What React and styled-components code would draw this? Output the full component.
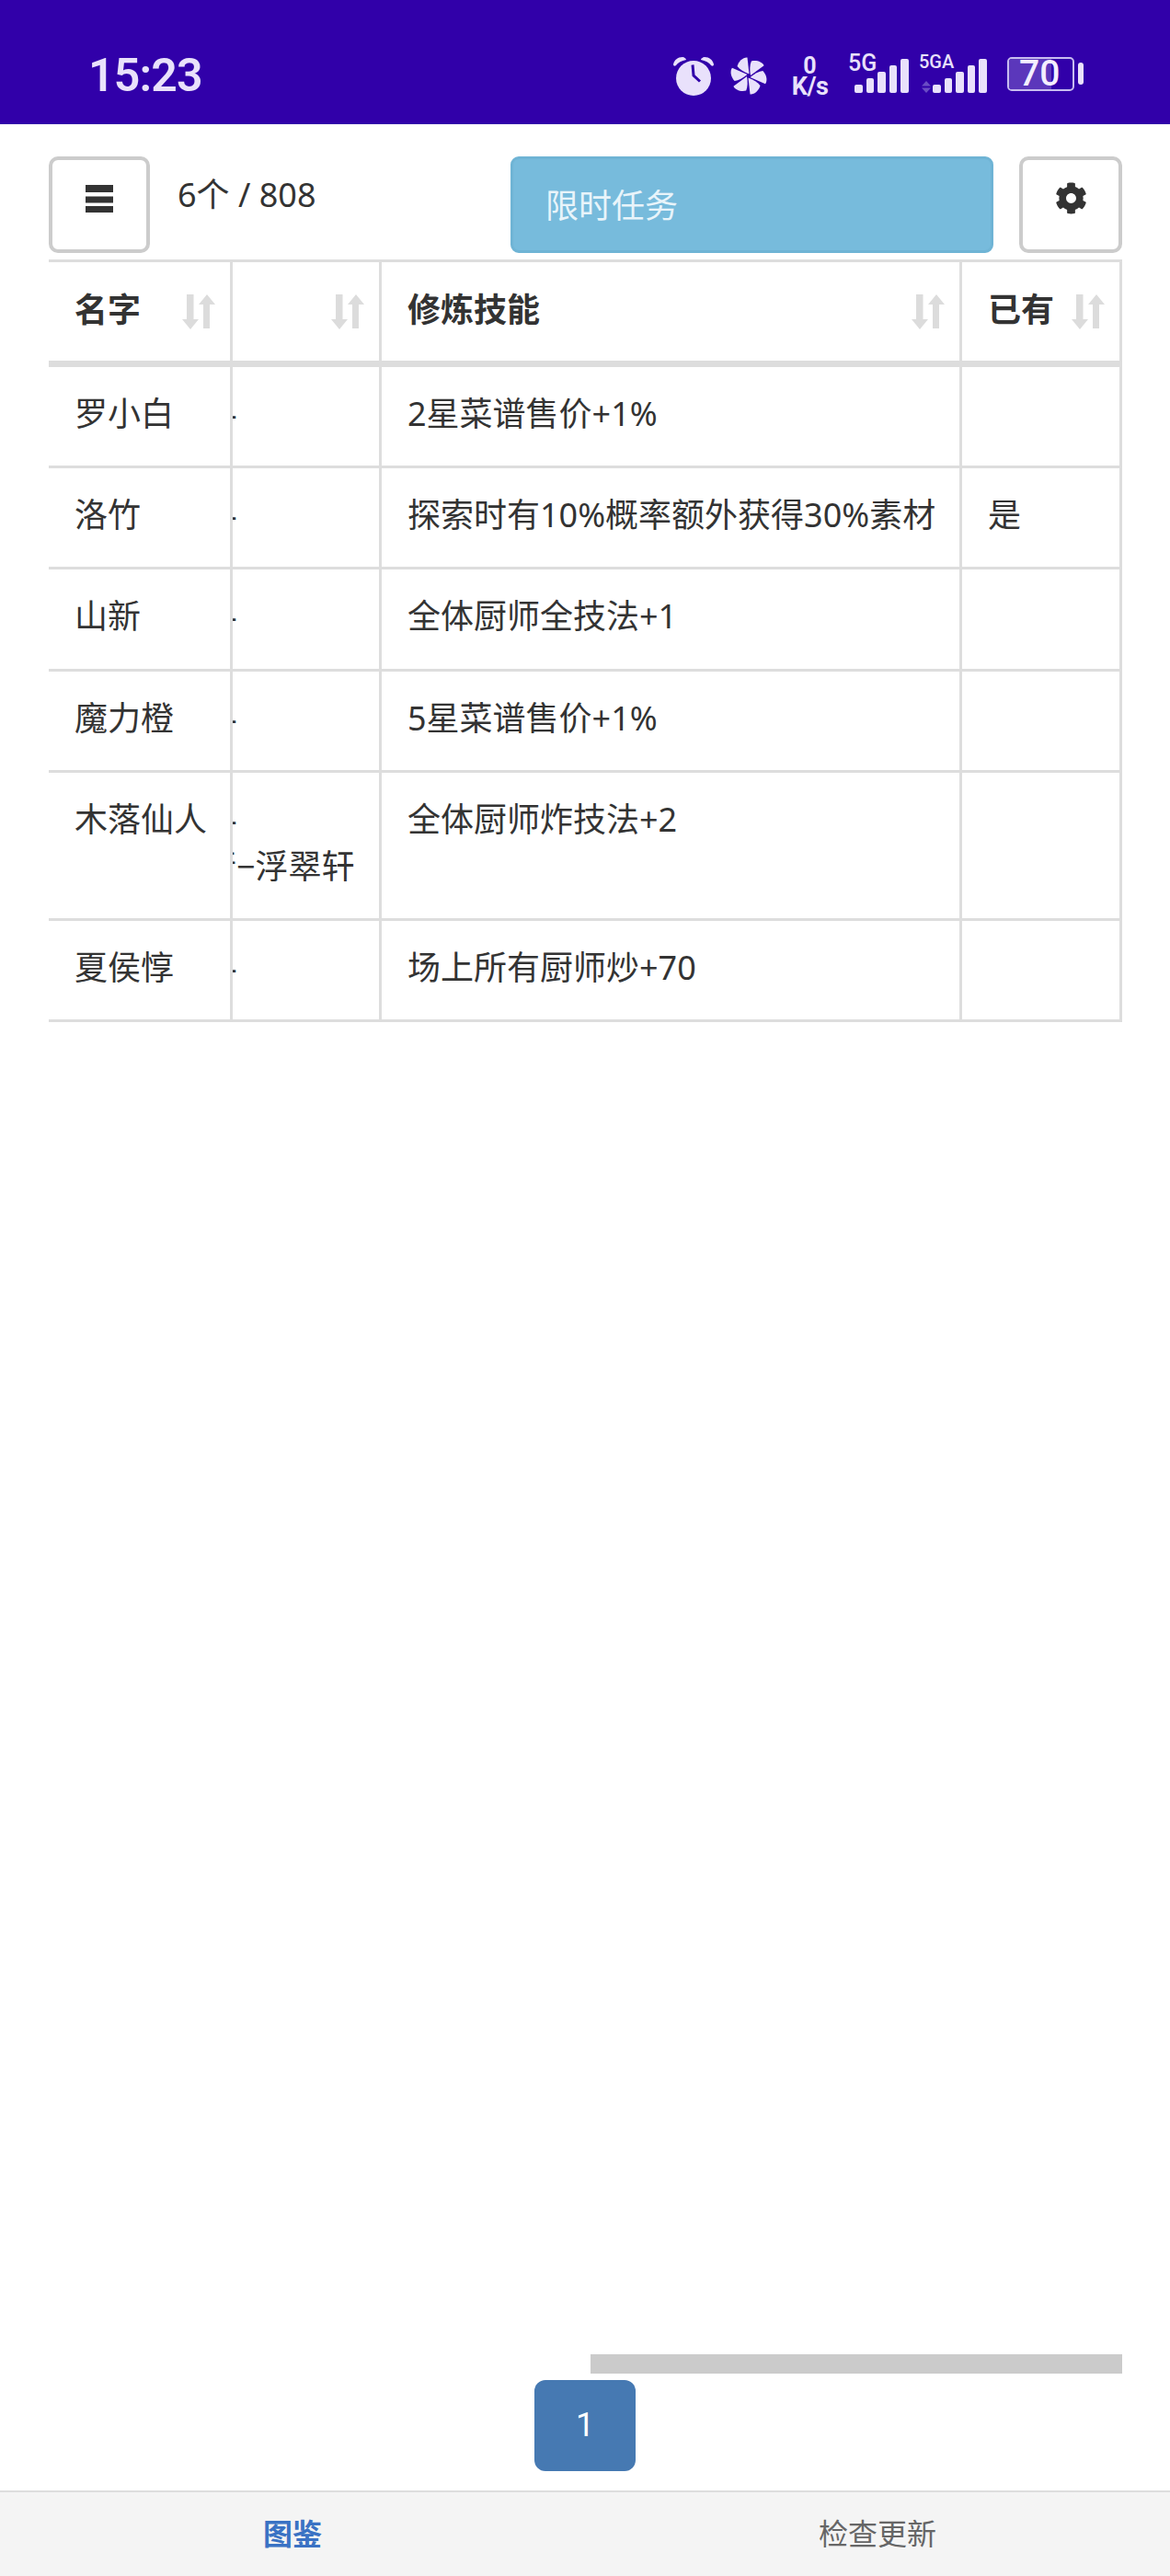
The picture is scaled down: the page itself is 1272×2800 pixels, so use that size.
import styled, { createGlobalStyle } from "styled-components";
import { FaCog } from "react-icons/fa";

const GlobalStyle = createGlobalStyle`
  html, body { margin: 0; padding: 0; background: #fff; }
  body { font-family: Roboto, "Noto Sans CJK SC", sans-serif; color: #333; }
  * { box-sizing: border-box; }
`;

const Page = styled.div`
  height: 2800px;
  display: flex;
  flex-direction: column;
  overflow: hidden;
`;

const StatusBar = styled.div`
  height: 135px;
  flex: none;
  background: #3100a9;
  color: #e9e1fb;
  display: flex;
  align-items: flex-start;
  padding: 59px 94px 0 96px;
`;

const Clock = styled.div`
  font-size: 50px;
  font-weight: 600;
  line-height: 57px;
  letter-spacing: -0.8px;
  margin-top: -5px;
`;

const StatusIcons = styled.div`
  margin-left: auto;
  display: flex;
  align-items: flex-start;
`;

const Slot = styled.div`
  margin-left: ${(p) => p.$gap || 0}px;
  margin-top: ${(p) => p.$top || 0}px;
  flex: none;
  display: flex;
`;

const Speed = styled.div`
  width: 41px;
  margin-top: -1px;
  text-align: center;
  font-weight: 700;
  .num { font-size: 25px; line-height: 23px; }
  .unit { font-size: 27px; line-height: 23px; letter-spacing: -0.5px; margin: 0 -2px; }
`;

const Signal = styled.div`
  position: relative;
  width: ${(p) => p.$w}px;
  height: 42px;
  display: flex;
  justify-content: flex-end;
  align-items: flex-end;
  gap: 4px;
`;

const SignalLabel = styled.span`
  position: absolute;
  top: ${(p) => p.$top}px;
  left: 0;
  font-size: ${(p) => p.$size}px;
  line-height: 1;
  font-weight: 500;
`;

const Bar = styled.i`
  display: block;
  width: 8.6px;
  height: ${(p) => p.$h}px;
  background: #e9e1fb;
  border-radius: 2px;
`;

const Arrows = styled.svg`
  position: absolute;
  left: 3px;
  bottom: 0;
`;

const Battery = styled.div`
  position: relative;
  width: 73px;
  height: 37px;
  border: 2px solid #c8bcf0;
  border-radius: 5px;
  overflow: hidden;
  color: #f3eeff;
  font-size: 39px;
  font-weight: 500;
  line-height: 33px;
  padding-left: 11px;
  &::before {
    content: "";
    position: absolute;
    left: 0;
    top: 0;
    bottom: 0;
    width: 46px;
    background: #5b37bb;
  }
  span { position: relative; }
`;

const BatteryCap = styled.div`
  width: 6px;
  height: 24px;
  margin: 6px 0 0 4px;
  border-radius: 3px;
  background: #e9e1fb;
`;

const Main = styled.div`
  flex: 1;
  display: flex;
  flex-direction: column;
  padding: 35px 52px 0 53px;
`;

const Toolbar = styled.div`
  display: flex;
  align-items: flex-start;
  margin-bottom: 7px;
`;

const IconButton = styled.div`
  width: ${(p) => p.$w}px;
  height: 105px;
  flex: none;
  border: 4px solid #ccc;
  border-radius: 10px;
  background: #fff;
  color: #333;
  display: flex;
  align-items: center;
  justify-content: center;
  padding-bottom: 14px;
`;

const Count = styled.div`
  margin-left: 30px;
  margin-top: 16px;
  font-family: "Noto Sans", "Noto Sans CJK SC", sans-serif;
  font-size: 36px;
  line-height: 52px;
  color: #333;
  flex: 1;
`;

const TaskButton = styled.div`
  width: 525px;
  height: 105px;
  margin-right: 28px;
  flex: none;
  background: #77bbdc;
  border: 3px solid #6fb4d5;
  border-radius: 9px;
  color: #e8f4fa;
  font-size: 36px;
  line-height: 99px;
  padding-left: 35px;
  padding-top: 3px;
`;

const Table = styled.table`
  width: 100%;
  table-layout: fixed;
  border-collapse: separate;
  border-spacing: 0;
  border-top: 3px solid #ddd;
  font-family: "Noto Sans", "Noto Sans CJK SC", sans-serif;
  font-size: 36px;
  line-height: 51.2px;
  color: #333;
`;

const Th = styled.th`
  height: 114px;
  padding: 0 16px 0 28px;
  border-right: 3px solid #ddd;
  border-bottom: 7px solid #ddd;
  font-weight: 700;
  text-align: left;
`;

const ThInner = styled.div`
  display: flex;
  align-items: center;
  justify-content: space-between;
  height: 100%;
  span { margin-top: -4px; }
`;

const Td = styled.td`
  padding: 25px 0 31px 28px;
  border-right: 3px solid #ddd;
  border-bottom: 3px solid #ddd;
  vertical-align: top;
  white-space: nowrap;
`;

const ClipTd = styled(Td)`
  padding-left: 0;
  overflow: hidden;
`;

const ClipLine = styled.div`
  margin-left: ${(p) => p.$shift}px;
`;

const Spacer = styled.div`
  flex: 1;
`;

const ScrollThumb = styled.div`
  width: 578px;
  height: 21px;
  margin-left: auto;
  background: #cbcbcb;
  flex: none;
`;

const Pager = styled.div`
  display: flex;
  justify-content: center;
  margin: 7px 0 21px;
`;

const PageNum = styled.div`
  width: 110px;
  height: 99px;
  border-radius: 12px;
  background: #4679b2;
  color: #fff;
  font-size: 36px;
  line-height: 99px;
  text-align: center;
  margin-right: 1px;
`;

const Footer = styled.div`
  height: 93px;
  flex: none;
  display: grid;
  grid-template-columns: 1fr 1fr;
  background: #f4f4f4;
  border-top: 2px solid #ddd;
`;

const FooterTab = styled.div`
  text-align: center;
  font-size: 32px;
  line-height: 93px;
  font-weight: ${(p) => (p.$active ? 700 : 400)};
  color: ${(p) => (p.$active ? "#3a72c4" : "#666")};
`;

const AlarmIcon = () => (
  <svg width="44" height="43" viewBox="0 0 44 43">
    <circle cx="22" cy="24" r="19" fill="#e9e1fb" />
    <path d="M0 9 C1 4 5 1 10 1 C12 1 14 3 14 4 C9 5 5 7 3 10 C2 11 0 11 0 9Z" fill="#e9e1fb" />
    <path d="M44 9 C43 4 39 1 34 1 C32 1 30 3 30 4 C35 5 39 7 41 10 C42 11 44 11 44 9Z" fill="#e9e1fb" />
    <path d="M21 9.5 L22 21 L29 27.5" fill="none" stroke="#3100a9" strokeWidth="3" />
  </svg>
);

const PinwheelIcon = () => (
  <svg width="42" height="41" viewBox="-21 -20.5 42 41">
    {[0, 60, 120, 180, 240, 300].map((a) => (
      <path
        key={a}
        d="M0.5 -2 L-1.5 -20 C-6 -20.5 -11 -16 -12.5 -10.5 C-10 -7 -5 -4 0.5 -2Z"
        fill="#e9e1fb"
        transform={`rotate(${a})`}
      />
    ))}
    <circle r="2" fill="#3100a9" />
  </svg>
);

const MenuIcon = () => (
  <svg width="30" height="30" viewBox="0 0 30 30">
    <rect x="0" y="0" width="30" height="8" fill="#333" />
    <rect x="0" y="12.5" width="30" height="7" fill="#333" />
    <rect x="0" y="23" width="30" height="7" fill="#333" />
  </svg>
);

const SortIcon = () => (
  <svg width="36" height="38" viewBox="0 0 36 38" style={{ flex: "none" }}>
    <path d="M5 0 H12.5 V27 H18 L9 38 L0 27 H5Z" fill="#dcdcdc" />
    <path d="M27 0 L36 11 H30 V37 H23 V11 H18Z" fill="#dcdcdc" />
  </svg>
);

const rows = [
  { name: "罗小白", skill: "2星菜谱售价+1%" },
  { name: "洛竹", skill: "探索时有10%概率额外获得30%素材", owned: "是" },
  { name: "山新", skill: "全体厨师全技法+1" },
  { name: "魔力橙", skill: "5星菜谱售价+1%" },
  { name: "木落仙人", skill: "全体厨师炸技法+2", place: "行−浮翠轩" },
  { name: "夏侯惇", skill: "场上所有厨师炒+70" },
];

const headers = ["名字", "", "修炼技能", "已有"];

const App = () => {
  return (
    <Page>
      <GlobalStyle />
      <StatusBar>
        <Clock>15:23</Clock>
        <StatusIcons>
          <Slot $top={2}><AlarmIcon /></Slot>
          <Slot $gap={17} $top={3}><PinwheelIcon /></Slot>
          <Slot $gap={25} $top={2}>
            <Speed>
              <div className="num">0</div>
              <div className="unit">K/s</div>
            </Speed>
          </Slot>
          <Slot $gap={21}>
            <Signal $w={66}>
              <SignalLabel $size={25} $top={-3}>5G</SignalLabel>
              {[9, 16, 23, 30, 37].map((h) => <Bar key={h} $h={h} />)}
            </Signal>
          </Slot>
          <Slot $gap={11}>
            <Signal $w={74}>
              <SignalLabel $size={20} $top={-2}>5GA</SignalLabel>
              <Arrows width="10" height="13" viewBox="0 0 10 13">
                <path d="M5 0 L10 5.5 H0Z M5 13 L10 7.5 H0Z" fill="#6a4cc4" />
              </Arrows>
              {[9, 16, 23, 30, 37].map((h) => <Bar key={h} $h={h} />)}
            </Signal>
          </Slot>
          <Slot $gap={22} $top={3}>
            <Battery><span>70</span></Battery>
            <BatteryCap />
          </Slot>
        </StatusIcons>
      </StatusBar>
      <Main>
        <Toolbar>
          <IconButton $w={110}><MenuIcon /></IconButton>
          <Count>6个 / 808</Count>
          <TaskButton>限时任务</TaskButton>
          <IconButton $w={112}><FaCog size={35} /></IconButton>
        </Toolbar>
        <Table>
          <colgroup>
            <col style={{ width: 200 }} />
            <col style={{ width: 162 }} />
            <col style={{ width: 631 }} />
            <col style={{ width: 174 }} />
          </colgroup>
          <thead>
            <tr>
              {headers.map((h, i) => (
                <Th key={i}>
                  <ThInner>
                    <span>{h}</span>
                    <SortIcon />
                  </ThInner>
                </Th>
              ))}
            </tr>
          </thead>
          <tbody>
            {rows.map((r) => (
              <tr key={r.name}>
                <Td>{r.name}</Td>
                <ClipTd>
                  <ClipLine $shift={-7}>-</ClipLine>
                  {r.place && <ClipLine $shift={-32}>{r.place}</ClipLine>}
                </ClipTd>
                <Td>{r.skill}</Td>
                <Td>{r.owned}</Td>
              </tr>
            ))}
          </tbody>
        </Table>
        <Spacer />
        <ScrollThumb />
        <Pager><PageNum>1</PageNum></Pager>
      </Main>
      <Footer>
        <FooterTab $active>图鉴</FooterTab>
        <FooterTab>检查更新</FooterTab>
      </Footer>
    </Page>
  );
};

export default App;
